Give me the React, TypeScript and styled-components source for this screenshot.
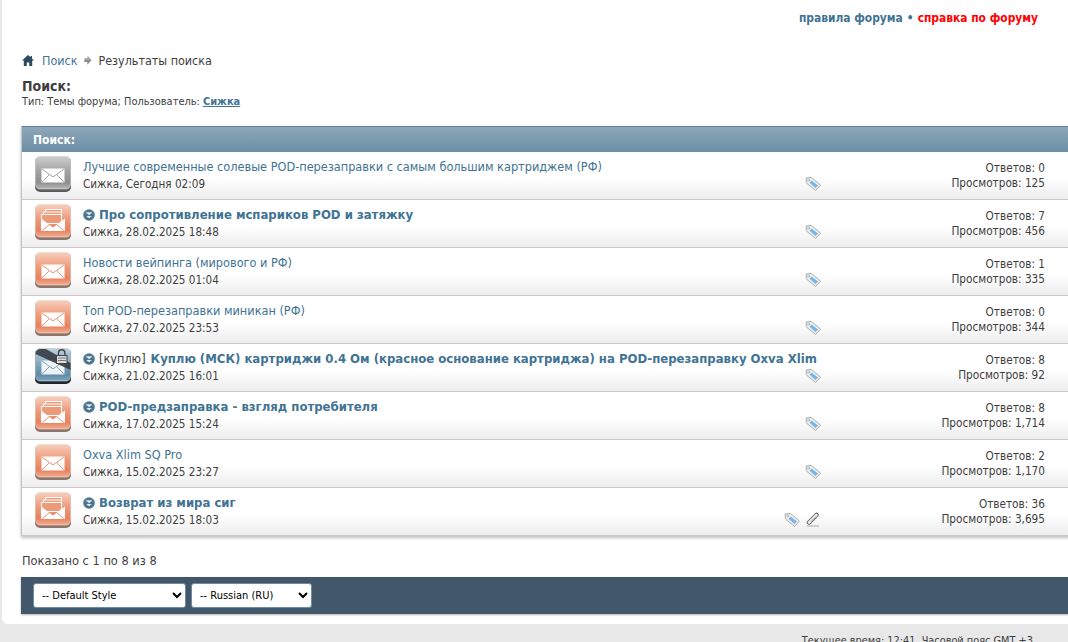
import React from 'react';
import styled, { createGlobalStyle } from 'styled-components';

const GlobalStyle = createGlobalStyle`
  html, body {
    margin: 0;
    padding: 0;
    height: 642px;
    overflow: hidden;
    background: #e8e8e8;
    font-family: "DejaVu Sans Condensed", "DejaVu Sans", sans-serif;
    font-stretch: condensed;
    font-size: 11.7px;
    color: #3e3e3e;
  }
`;

const Viewport = styled.div`
  width: 1068px;
  height: 642px;
  overflow: hidden;
`;

const Page = styled.div`
  width: 1100px;
  height: 624px;
  margin-left: 2px;
  padding-left: 20px;
  box-sizing: border-box;
  background: #fff;
  border-bottom-left-radius: 6px;
`;

const TopLinks = styled.div`
  display: flex;
  justify-content: flex-end;
  gap: 4px;
  width: 1016px;
  height: 44px;
  padding-top: 11px;
  box-sizing: border-box;
  font-size: 11.9px;
  font-weight: bold;
  color: #417394;
  line-height: 15px;
`;

const HelpLink = styled.span`
  color: #ff0000;
`;

const Breadcrumbs = styled.div`
  display: flex;
  align-items: center;
  height: 14px;
  margin-top: 9px;
  font-size: 12.45px;
  color: #3e3e3e;
`;

const CrumbLink = styled.span`
  color: #417394;
  margin-left: 8px;
`;

const CrumbArrow = styled.svg`
  margin: 0 6px 0 7px;
`;

const Heading = styled.h1`
  margin: 11px 0 0;
  font-size: 14px;
  line-height: 16px;
  font-weight: bold;
  color: #3e3e3e;
`;

const Criteria = styled.div`
  font-size: 10.95px;
  line-height: 13px;
  margin-top: 1px;
`;

const UserLink = styled.span`
  color: #417394;
  font-weight: bold;
  text-decoration: underline;
`;

const ResultsPanel = styled.div`
  margin: 18px 0 0 -1px;
  border-left: 1px solid #c4c4c4;
  box-shadow: 0 2px 3px rgba(0, 0, 0, 0.25);
`;

const PanelHeader = styled.div`
  height: 25px;
  padding-left: 11px;
  display: flex;
  align-items: center;
  border-top: 1px solid #5f8097;
  background: linear-gradient(#8da7b8, #6b8ea6);
  color: #fff;
  font-size: 12px;
  font-weight: bold;
`;

const Row = styled.div`
  display: grid;
  grid-template-columns: 61px 680px 1fr;
  height: 47px;
  border-bottom: 1px solid #c8c8c8;
  background: linear-gradient(#fff 0%, #fff 55%, #ededed 100%);
`;

const IconCell = styled.div`
  padding: 4px 0 0 13px;
`;

const TitleCell = styled.div`
  padding-top: 6px;
  min-width: 0;
`;

const TitleLine = styled.div`
  display: flex;
  align-items: center;
  height: 17px;
  white-space: nowrap;
  font-size: 12.6px;
`;

const ThreadLink = styled.span<{ $unread?: boolean }>`
  color: #417394;
  font-weight: ${(p) => (p.$unread ? 'bold' : 'normal')};
  font-size: ${(p) => (p.$unread ? '13px' : '12.6px')};
`;

const Prefix = styled.span`
  margin-right: 5px;
  color: #3e3e3e;
`;

const NewBullet = styled.svg`
  margin-right: 4px;
  flex: none;
`;

const Meta = styled.div`
  margin-top: 2px;
  line-height: 15px;
  font-size: 11.6px;
`;

const StatsCell = styled.div`
  display: flex;
  justify-content: space-between;
  width: 282px;
`;

const RowIcons = styled.div`
  display: flex;
  justify-content: flex-end;
  align-items: center;
  gap: 5px;
  height: 16px;
  width: 58px;
  margin-top: 23px;
`;

const Stats = styled.div`
  padding-top: 9px;
  text-align: right;
  line-height: 15px;
`;

const Pagination = styled.div`
  margin-top: 15px;
  height: 19px;
  line-height: 19px;
  font-size: 12.7px;
`;

const StyleBar = styled.div`
  margin: 7px 0 0 -1px;
  height: 37px;
  background: #425769;
  display: flex;
  align-items: center;
  gap: 5px;
  padding-left: 12px;
  box-shadow: 0 1px 2px rgba(0, 0, 0, 0.3);
`;

const Select = styled.select<{ $width: number }>`
  width: ${(p) => p.$width}px;
  height: 25px;
  border: 1px solid #6d8ba3;
  border-radius: 3px;
  background: #fff;
  color: #000;
  font-family: inherit;
  font-stretch: inherit;
  font-size: 11px;
  padding-left: 4px;
`;

const FooterTime = styled.div`
  width: 1036px;
  margin-top: 9px;
  text-align: right;
  font-size: 10.85px;
  line-height: 15px;
  color: #3e3e3e;
`;

type Variant = 'grey' | 'orange' | 'stack' | 'locked';

interface Thread {
  title: string;
  meta: string;
  replies: string;
  views: string;
  variant: Variant;
  unread?: boolean;
  prefix?: string;
  attachment?: boolean;
}

const THREADS: Thread[] = [
  { title: 'Лучшие современные солевые POD-перезаправки с самым большим картриджем (РФ)', meta: 'Сижка, Сегодня 02:09', replies: '0', views: '125', variant: 'grey' },
  { title: 'Про сопротивление мспариков POD и затяжку', meta: 'Сижка, 28.02.2025 18:48', replies: '7', views: '456', variant: 'stack', unread: true },
  { title: 'Новости вейпинга (мирового и РФ)', meta: 'Сижка, 28.02.2025 01:04', replies: '1', views: '335', variant: 'orange' },
  { title: 'Топ POD-перезаправки миникан (РФ)', meta: 'Сижка, 27.02.2025 23:53', replies: '0', views: '344', variant: 'orange' },
  { title: 'Куплю (МСК) картриджи 0.4 Ом (красное основание картриджа) на POD-перезаправку Oxva Xlim', meta: 'Сижка, 21.02.2025 16:01', replies: '8', views: '92', variant: 'locked', unread: true, prefix: '[куплю]' },
  { title: 'POD-предзаправка - взгляд потребителя', meta: 'Сижка, 17.02.2025 15:24', replies: '8', views: '1,714', variant: 'stack', unread: true },
  { title: 'Oxva Xlim SQ Pro', meta: 'Сижка, 15.02.2025 23:27', replies: '2', views: '1,170', variant: 'orange' },
  { title: 'Возврат из мира сиг', meta: 'Сижка, 15.02.2025 18:03', replies: '36', views: '3,695', variant: 'stack', unread: true, attachment: true }
];

const PALETTE: Record<Variant, [string, string, string, string, string]> = {
  grey: ['#cfcfcf', '#a2a2a2', '#8e8e8e', '#b5b5b5', '#5c5c5c'],
  orange: ['#f7cfbd', '#ee9a7a', '#e8825e', '#f2ad92', '#8c7468'],
  stack: ['#f7cfbd', '#ee9a7a', '#e8825e', '#f2ad92', '#8c7468'],
  locked: ['#bcd2e0', '#86a9c0', '#5f8ba8', '#7fa4bc', '#1f262b']
};

const ThreadIcon: React.FC<{ variant: Variant; id: number }> = ({ variant, id }) => {
  const [top, middle, low, bottom, edge] = PALETTE[variant];
  const line = variant === 'grey' ? '#a0a0a0' : variant === 'locked' ? '#7fa4bc' : '#ec9473';
  return (
    <svg width="36" height="36" viewBox="0 0 36 36">
      <defs>
        <linearGradient id={`ti${id}`} x1="0" y1="0" x2="0" y2="1">
          <stop offset="0" stopColor={top} />
          <stop offset="0.45" stopColor={middle} />
          <stop offset="0.8" stopColor={low} />
          <stop offset="1" stopColor={bottom} />
        </linearGradient>
      </defs>
      <rect x="0" y="0.5" width="36" height="35.500" rx="5" fill={edge} />
      <rect x="0.5" y="0.5" width="35" height="32.500" rx="4.500" fill={`url(#ti${id})`} stroke="#fff" strokeOpacity="0.45" />
      {variant === 'stack' ? (
        <>
          <g fill={middle} stroke="#fff" strokeWidth="1">
            <path d="M10.500 5.500h16v9h-16z" />
            <path d="M8.500 8h18v9h-18z" />
            <path d="M6.500 10.500h20v9h-20z" />
          </g>
          <path d="M6 14.500L18 23.500L30 14.500V27H6z" fill="#fff" />
          <path d="M6.500 27L14.500 20.500M29.500 27L21.500 20.500" fill="none" stroke={line} strokeWidth="1" />
        </>
      ) : (
        <>
          <path d="M6.500 12.500h23v14h-23z" fill="#fff" fillOpacity={variant === 'locked' ? 0.88 : 1} />
          <path d="M7 13L18 21L29 13M7 26L14.500 18.500M29 26L21.500 18.500" fill="none" stroke={line} strokeWidth="1" />
        </>
      )}
      {variant === 'locked' && (
        <g>
          <path d="M0.500 6a5 5 0 0 1 5-5h5.500L35.500 15v7z" fill="#33393e" opacity="0.88" />
          <rect x="21.500" y="7.500" width="10.500" height="8" fill="#dcdcdc" stroke="#444" />
          <path d="M23.500 7.500V5a3.200 3.200 0 0 1 6.400 0V7.500" fill="none" stroke="#444" strokeWidth="1.400" />
          <path d="M23 10h8M23 12.500h8" stroke="#777" />
        </g>
      )}
    </svg>
  );
};

const TagIcon = () => (
  <svg width="16" height="15" viewBox="0 0 16 15">
    <path d="M1 2L6.500 1.500L15.500 9L10.500 14.500L1.500 7Z" fill="#ececec" stroke="#b0b0b0" />
    <path d="M6.500 4.500L13 9.500L10.500 12L4.500 6.800Z" fill="#78b6ec" />
    <circle cx="3.700" cy="4" r="1" fill="#fff" stroke="#999" strokeWidth="0.6" />
  </svg>
);

const ClipIcon = () => (
  <svg width="16" height="15" viewBox="0 0 16 15">
    <path d="M4 10.500L11.500 3" fill="none" stroke="#666" strokeWidth="4.500" strokeLinecap="round" />
    <path d="M4 10.500L11.500 3" fill="none" stroke="#eee" strokeWidth="2.500" strokeLinecap="round" />
    <path d="M6 9.500L11 4.500" fill="none" stroke="#777" strokeWidth="0.800" />
    <path d="M2 14h12" stroke="#c4c4c4" strokeWidth="1.500" />
  </svg>
);

const Bullet = () => (
  <NewBullet width="12" height="12" viewBox="0 0 12 12">
    <circle cx="6" cy="6" r="5.800" fill="#4f7690" />
    <path d="M2.500 3.200h7L6 6.200z" fill="#dfe8ee" />
    <path d="M3.200 7l2.800 2.300L8.800 7z" fill="#dfe8ee" />
  </NewBullet>
);

export default function App() {
  return (
    <Viewport>
      <GlobalStyle />
      <Page>
        <TopLinks>
          <span>правила форума</span>
          <span>•</span>
          <HelpLink>справка по форуму</HelpLink>
        </TopLinks>
        <Breadcrumbs>
          <svg width="12" height="11" viewBox="0 0 12 11">
            <path d="M6 0L0 5.500h1.800V11h3V7.500h2.400V11h3V5.500H12L10 3.600V1H8.600v1.300z" fill="#2f4a5e" />
          </svg>
          <CrumbLink>Поиск</CrumbLink>
          <CrumbArrow width="8" height="10" viewBox="0 0 8 10">
            <path d="M0.500 3h3V0.500L7.500 5L3.500 9.500V7h-3z" fill="#a8a8a8" />
            <path d="M0.500 5h7L3.500 9.500V7h-3z" fill="#8a8a8a" />
          </CrumbArrow>
          <span>Результаты поиска</span>
        </Breadcrumbs>
        <Heading>Поиск:</Heading>
        <Criteria>
          Тип: Темы форума; Пользователь: <UserLink>Сижка</UserLink>
        </Criteria>
        <ResultsPanel>
          <PanelHeader>Поиск:</PanelHeader>
          {THREADS.map((thread, i) => (
            <Row key={thread.meta}>
              <IconCell>
                <ThreadIcon variant={thread.variant} id={i} />
              </IconCell>
              <TitleCell>
                <TitleLine>
                  {thread.unread && <Bullet />}
                  {thread.prefix && <Prefix>{thread.prefix}</Prefix>}
                  <ThreadLink $unread={thread.unread}>{thread.title}</ThreadLink>
                </TitleLine>
                <Meta>{thread.meta}</Meta>
              </TitleCell>
              <StatsCell>
                <RowIcons>
                  <TagIcon />
                  {thread.attachment && <ClipIcon />}
                </RowIcons>
                <Stats>
                  <div>Ответов: {thread.replies}</div>
                  <div>Просмотров: {thread.views}</div>
                </Stats>
              </StatsCell>
            </Row>
          ))}
        </ResultsPanel>
        <Pagination>Показано с 1 по 8 из 8</Pagination>
        <StyleBar>
          <Select $width={153} defaultValue="default">
            <option value="default">-- Default Style</option>
          </Select>
          <Select $width={121} defaultValue="ru">
            <option value="ru">-- Russian (RU)</option>
          </Select>
        </StyleBar>
      </Page>
      <FooterTime>Текущее время: 12:41. Часовой пояс GMT +3.</FooterTime>
    </Viewport>
  );
}
